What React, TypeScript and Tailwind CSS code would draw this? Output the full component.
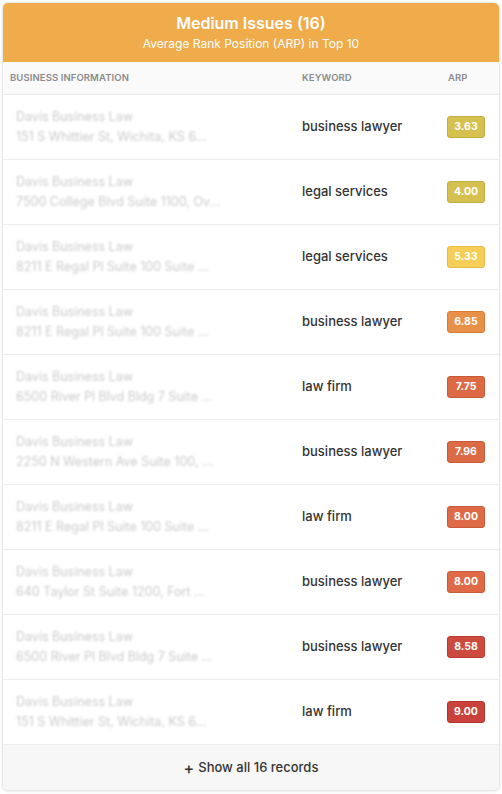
import React from "react";

const rows = [
  { addr: "151 S Whittier St, Wichita, KS 6...", kw: "business lawyer", arp: "3.63", bg: "bg-[#d6c04f]", bd: "border-[#c4ad3f]" },
  { addr: "7500 College Blvd Suite 1100, Ov...", kw: "legal services", arp: "4.00", bg: "bg-[#d6c04f]", bd: "border-[#c4ad3f]" },
  { addr: "8211 E Regal Pl Suite 100 Suite ...", kw: "legal services", arp: "5.33", bg: "bg-[#f5ce57]", bd: "border-[#e6bc45]" },
  { addr: "8211 E Regal Pl Suite 100 Suite ...", kw: "business lawyer", arp: "6.85", bg: "bg-[#e99048]", bd: "border-[#d67d37]" },
  { addr: "6500 River Pl Blvd Bldg 7 Suite ...", kw: "law firm", arp: "7.75", bg: "bg-[#dc6a45]", bd: "border-[#c85a37]" },
  { addr: "2250 N Western Ave Suite 100, ...", kw: "business lawyer", arp: "7.96", bg: "bg-[#dc6a45]", bd: "border-[#c85a37]" },
  { addr: "8211 E Regal Pl Suite 100 Suite ...", kw: "law firm", arp: "8.00", bg: "bg-[#de6a47]", bd: "border-[#c95a39]" },
  { addr: "640 Taylor St Suite 1200, Fort ...", kw: "business lawyer", arp: "8.00", bg: "bg-[#de6a47]", bd: "border-[#c95a39]" },
  { addr: "6500 River Pl Blvd Bldg 7 Suite ...", kw: "business lawyer", arp: "8.58", bg: "bg-[#cd4a3e]", bd: "border-[#b83c31]" },
  { addr: "151 S Whittier St, Wichita, KS 6...", kw: "law firm", arp: "9.00", bg: "bg-[#c9423b]", bd: "border-[#b4352f]" },
];

export default function App() {
  return (
    <div className="w-[502px] h-[794px] bg-white p-[2px] pb-[4px]" style={{ fontFamily: "Inter, 'Open Sans', sans-serif" }}>
      <div className="rounded-[6px] overflow-hidden border border-[#e8e8e8] shadow-[0_1px_3px_rgba(0,0,0,0.08)] bg-white">
        <div className="bg-[#f0ab4b] h-[59px] flex flex-col items-center justify-center text-white">
          <div className="text-[16px] font-semibold leading-[20px]">Medium Issues (16)</div>
          <div className="text-[12px] leading-[18px] mt-[2px]">Average Rank Position (ARP) in Top 10</div>
        </div>
        <div className="h-[33px] bg-[#fafafa] border-b border-[#ececec] flex items-center text-[9.5px] font-semibold text-[#8a8a8a] tracking-[0.1px]">
          <div className="w-[299px] pl-[7px]">BUSINESS INFORMATION</div>
          <div className="flex-1">KEYWORD</div>
          <div className="w-[51px]">ARP</div>
        </div>
        {rows.map((r, i) => (
          <div key={i} className="h-[65px] flex items-center border-b border-[#ededed]">
            <div className="w-[299px] h-full flex items-center">
              <div className="w-[248px] h-[58px] bg-white flex flex-col justify-center pl-[13px] blur-[0.8px] text-[#cbcbcb] text-[12.5px] leading-[20px]">
                <div>Davis Business Law</div>
                <div>{r.addr}</div>
              </div>
            </div>
            <div className="flex-1 text-[13px] text-[#333] font-medium">{r.kw}</div>
            <div className="w-[52px] flex">
              <div className={`w-[38px] h-[22px] rounded-[3px] border ${r.bg} ${r.bd} text-white text-[10.5px] font-bold flex items-center justify-center`}>
                {r.arp}
              </div>
            </div>
          </div>
        ))}
        <div className="h-[45px] bg-[#f7f7f7] flex items-center justify-center text-[13px] text-[#333] font-medium">
          <span className="text-[16px] mr-[4px] leading-none">+</span>Show all 16 records
        </div>
      </div>
    </div>
  );
}
